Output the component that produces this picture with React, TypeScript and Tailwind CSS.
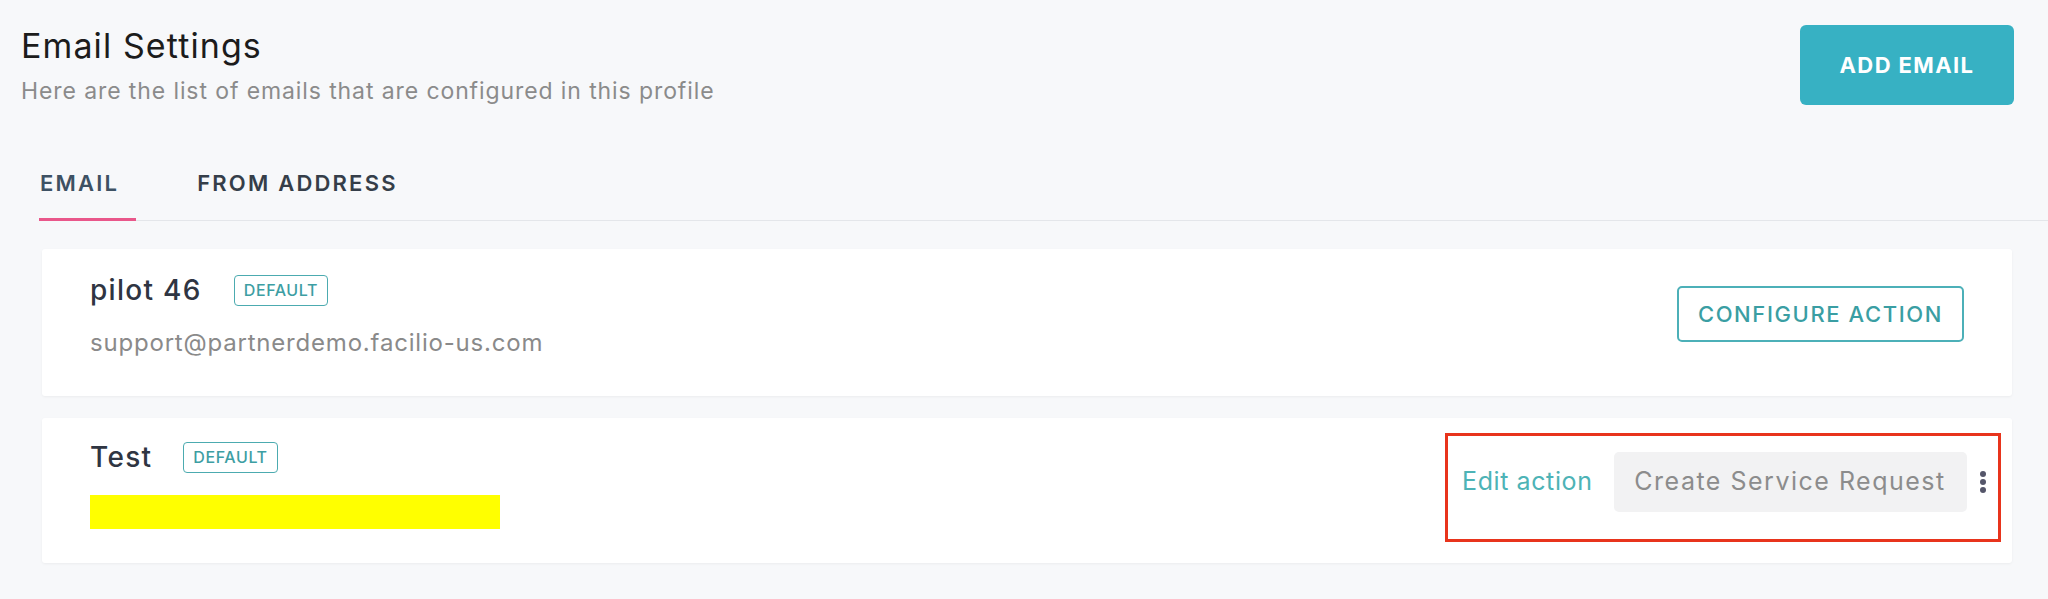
import React from "react";

const font = { fontFamily: "Inter, 'Noto Sans', sans-serif" };

function DefaultBadge() {
    return (
        <span className="inline-flex items-center h-[31px] px-[9px] border-[1.5px] border-[#4cabb0] rounded-[4px] text-[16px] font-medium tracking-[0.6px] text-[#3d9ea3]">
            DEFAULT
        </span>
    );
}

function MoreDots() {
    return (
        <div className="flex flex-col gap-[2px]">
            <span className="w-[6px] h-[6px] rounded-full bg-[#55566a]" />
            <span className="w-[6px] h-[6px] rounded-full bg-[#55566a]" />
            <span className="w-[6px] h-[6px] rounded-full bg-[#55566a]" />
        </div>
    );
}

export default function App() {
    return (
        <div className="w-full min-h-[599px] bg-[#f7f8fa]" style={font}>
            {/* Header */}
            <div className="flex items-start justify-between pt-[25px] pl-[21px] pr-[34px]">
                <div className="pt-[1px]">
                    <h1 className="text-[34px] leading-[40px] font-normal text-[#1c1c1c] tracking-[1.1px]">Email Settings</h1>
                    <p className="mt-[10px] text-[23px] leading-[30px] text-[#8b8b8b] tracking-[0.9px]">
                        Here are the list of emails that are configured in this profile
                    </p>
                </div>
                <button className="w-[214px] h-[80px] rounded-[6px] bg-[#37b1c3] text-white text-[22px] font-bold tracking-[1.4px]">
                    ADD EMAIL
                </button>
            </div>

            {/* Tabs */}
            <div className="mt-[64px] ml-[39px] flex items-end border-b border-[#e4e6ea]">
                <button className="-mb-px pl-[1px] pr-[17px] pb-[22px] border-b-[3px] border-[#e9578a] text-[22px] leading-[26px] font-semibold tracking-[2.2px] text-[#3d5163]">
                    EMAIL
                </button>
                <button className="-mb-px ml-[61px] pb-[22px] border-b-[3px] border-transparent text-[22px] leading-[26px] font-semibold tracking-[2.2px] text-[#353e49]">
                    FROM ADDRESS
                </button>
            </div>

            {/* Email cards */}
            <div className="mt-[28px] ml-[42px] mr-[36px] flex flex-col gap-[22px]">
                <div className="h-[147px] bg-white rounded-[3px] shadow-[0_1px_3px_rgba(0,0,0,0.05)] flex items-start justify-between pl-[48px] pr-[48px] pt-[25px]">
                    <div>
                        <div className="flex items-center gap-[32px]">
                            <span className="text-[28px] leading-[32px] font-medium text-[#2f3542] tracking-[1.3px]">pilot 46</span>
                            <DefaultBadge />
                        </div>
                        <div className="mt-[22px] text-[24px] leading-[30px] text-[#8a8a8a] tracking-[0.8px]">
                            support@partnerdemo.facilio-us.com
                        </div>
                    </div>
                    <button className="mt-[12px] h-[56px] px-[19px] border-2 border-[#4cb0b8] rounded-[5px] text-[22px] font-medium tracking-[1.6px] text-[#3a9ea3]">
                        CONFIGURE ACTION
                    </button>
                </div>

                <div className="h-[145px] bg-white rounded-[3px] shadow-[0_1px_3px_rgba(0,0,0,0.05)] flex items-start justify-between pl-[48px] pr-[11px]">
                    <div className="pt-[23px]">
                        <div className="flex items-center gap-[31px]">
                            <span className="text-[28px] leading-[32px] font-medium text-[#2f3542] tracking-[1.3px]">Test</span>
                            <DefaultBadge />
                        </div>
                        <div className="mt-[22px] w-[410px] h-[34px] bg-[#ffff00]" />
                    </div>
                    <div className="mt-[15px] w-[556px] h-[109px] border-[3px] border-[#e8341c] flex items-start pl-[14px] pt-[16px]">
                        <span className="h-[60px] flex items-center text-[25px] text-[#4db3b6] tracking-[0.6px]">Edit action</span>
                        <div className="ml-[21px] w-[353px] h-[60px] rounded-[5px] bg-[#f2f2f3] flex items-center justify-center text-[25px] text-[#8c8c8c] tracking-[1.5px]">
                            Create Service Request
                        </div>
                        <div className="ml-[13px] h-[60px] flex items-center">
                            <MoreDots />
                        </div>
                    </div>
                </div>
            </div>
        </div>
    );
}
